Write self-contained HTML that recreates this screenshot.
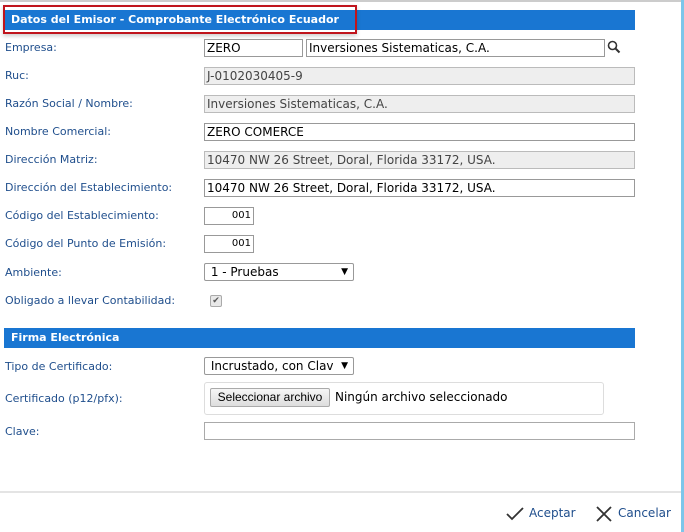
<!DOCTYPE html>
<html><head><style>
body{margin:0;width:684px;height:532px;background:#fff;font-family:"DejaVu Sans","Liberation Sans",sans-serif;position:relative;overflow:hidden}
.topl{position:absolute;left:0;top:0;width:684px;height:2px;background:#ccc}
.rb{position:absolute;left:681px;top:0;width:3px;height:532px;background:#7cc6ea}
.bar{position:absolute;left:4px;width:631px;height:20px;background:#1976d2;color:#fff;font-weight:bold;font-size:11px;line-height:20px;padding-left:7px;box-sizing:border-box}
.red{position:absolute;left:3px;top:5px;width:354px;height:29px;border:2px solid #c0141c;box-sizing:border-box;box-shadow:0 2px 4px rgba(0,0,0,.2)}
.lb{position:absolute;left:5px;font-size:11px;color:#1f4e8c;margin-top:1px}
.in{position:absolute;height:18px;border:1px solid #999;box-sizing:border-box;font-size:12px;line-height:16px;padding-left:2px;color:#000;white-space:nowrap;overflow:hidden;background:#fff}
.ro{background:#eee;border-color:#bbb;color:#444}
.num{text-align:right;padding-right:2px;font-size:10px}
.sel{border-radius:2px;padding-right:16px}
.sel span{display:block;overflow:hidden;width:126px}
.sel:after{content:"▼";position:absolute;right:5px;top:0;font-size:9px}
.foot{position:absolute;left:0;top:491px;width:681px;height:2px;background:#e4e4e4}
.btn{position:absolute;top:506px;font-size:12px;color:#1f4e8c}
</style></head><body>
<div class="topl"></div><div class="rb"></div>
<div class="bar" style="top:10px">Datos del Emisor - Comprobante Electrónico Ecuador</div>
<div class="red"></div>
<div class="lb" style="top:40px">Empresa:</div>
<div class="in" style="left:204px;top:39px;width:99px">ZERO</div>
<div class="in" style="left:306px;top:39px;width:299px">Inversiones Sistematicas, C.A.</div>
<svg style="position:absolute;left:607px;top:40px" width="14" height="14" viewBox="0 0 14 14"><circle cx="5.5" cy="5.5" r="4" fill="none" stroke="#333" stroke-width="1.6"/><path d="M8.5 8.5L12.5 12.5" stroke="#333" stroke-width="2"/></svg>
<div class="lb" style="top:68px">Ruc:</div>
<div class="in ro" style="left:204px;top:67px;width:431px">J-0102030405-9</div>
<div class="lb" style="top:96px">Razón Social / Nombre:</div>
<div class="in ro" style="left:204px;top:95px;width:431px">Inversiones Sistematicas, C.A.</div>
<div class="lb" style="top:124px">Nombre Comercial:</div>
<div class="in" style="left:204px;top:123px;width:431px">ZERO COMERCE</div>
<div class="lb" style="top:152px">Dirección Matriz:</div>
<div class="in ro" style="left:204px;top:151px;width:431px">10470 NW 26 Street, Doral, Florida 33172, USA.</div>
<div class="lb" style="top:180px">Dirección del Establecimiento:</div>
<div class="in" style="left:204px;top:179px;width:431px">10470 NW 26 Street, Doral, Florida 33172, USA.</div>
<div class="lb" style="top:208px">Código del Establecimiento:</div>
<div class="in num" style="left:204px;top:207px;width:50px">001</div>
<div class="lb" style="top:236px">Código del Punto de Emisión:</div>
<div class="in num" style="left:204px;top:235px;width:50px">001</div>
<div class="lb" style="top:265px">Ambiente:</div>
<div class="in sel" style="left:204px;top:263px;width:150px"><span>&nbsp;1 - Pruebas</span></div>
<div class="lb" style="top:293px">Obligado a llevar Contabilidad:</div>
<div style="position:absolute;left:210px;top:295px;width:10px;height:10px;border:1px solid #aaa;background:#e8e8e8;border-radius:2px;font-size:9px;line-height:10px;text-align:center;color:#555">✔</div>
<div class="bar" style="top:328px">Firma Electrónica</div>
<div class="lb" style="top:359px">Tipo de Certificado:</div>
<div class="in sel" style="left:204px;top:357px;width:150px"><span>&nbsp;Incrustado, con Clave</span></div>
<div class="lb" style="top:391px">Certificado (p12/pfx):</div>
<div style="position:absolute;left:204px;top:382px;width:400px;height:33px;border:1px solid #ddd;border-radius:3px;box-sizing:border-box"></div>
<div style="position:absolute;left:210px;top:388px;width:120px;height:19px;border:1px solid #aaa;background:linear-gradient(#f6f6f6,#ddd);border-radius:2px;box-sizing:border-box;font-family:'Liberation Sans',sans-serif;font-size:12px;line-height:17px;text-align:center">Seleccionar archivo</div>
<div style="position:absolute;left:335px;top:390px;font-size:12px">Ningún archivo seleccionado</div>
<div class="lb" style="top:424px">Clave:</div>
<div class="in" style="left:204px;top:422px;width:431px;border-color:#aaa"></div>
<div class="foot"></div>
<svg style="position:absolute;left:505px;top:506px" width="20" height="16" viewBox="0 0 20 16"><path d="M2 8L7 13L18 2" fill="none" stroke="#333" stroke-width="1.8"/></svg>
<div class="btn" style="left:529px">Aceptar</div>
<svg style="position:absolute;left:595px;top:505px" width="18" height="18" viewBox="0 0 18 18"><path d="M2 2L16 16M16 2L2 16" stroke="#333" stroke-width="1.8"/></svg>
<div class="btn" style="left:618px">Cancelar</div>
</body></html>
